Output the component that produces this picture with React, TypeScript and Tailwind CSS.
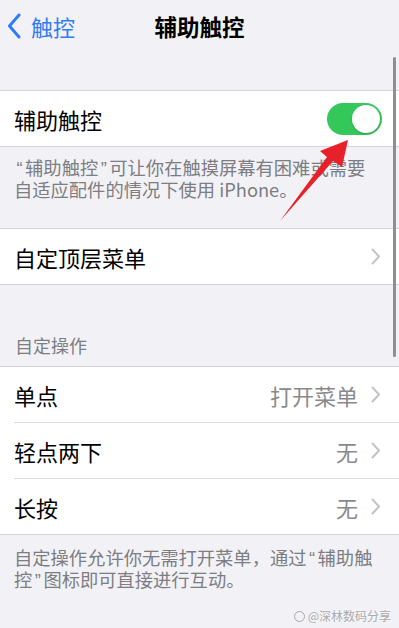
import React from "react";

const FONT = '"Noto Sans CJK SC", "Noto Sans", "Liberation Sans", sans-serif';

const Q = ({ c }: { c: string }) => (
  <span className="mx-[2.5px]" style={{ fontFamily: '"Liberation Sans", Arial, sans-serif' }}>{c}</span>
);

const Chevron = () => (
  <svg width="10" height="17" viewBox="0 0 10 17" className="ml-[13px] shrink-0">
    <path d="M1.5 1.5 L8 8.5 L1.5 15.5" fill="none" stroke="#c4c4c8" strokeWidth="2" strokeLinecap="round" strokeLinejoin="round" />
  </svg>
);

const Row = ({ label, value }: { label: string; value?: string }) => (
  <div className="h-[55px] flex items-center pl-[14px] pr-[18px] bg-white">
    <span className="flex-1 text-[22px] leading-none text-black">{label}</span>
    {value && <span className="text-[22px] leading-none text-[#8a8a8e]">{value}</span>}
    <Chevron />
  </div>
);

export default function App() {
  return (
    <div className="relative w-[399px] h-[628px] overflow-hidden bg-[#f2f2f6]" style={{ fontFamily: FONT }}>
      {/* Nav bar */}
      <div className="h-[52px] grid grid-cols-[1fr_auto_1fr] items-center">
        <div className="flex items-center pl-[7px] gap-[10px] text-[#2f7cf6]">
          <svg width="14" height="26" viewBox="0 0 14 26">
            <path d="M12 2 L2.5 13 L12 24" fill="none" stroke="#2f7cf6" strokeWidth="3" strokeLinecap="round" strokeLinejoin="round" />
          </svg>
          <span className="text-[22px] leading-none">触控</span>
        </div>
        <div className="text-[22.5px] leading-none font-semibold text-black">辅助触控</div>
        <div />
      </div>
      <div className="h-[38px]" />

      {/* Group 1 */}
      <div className="border-y border-[#d3d3d8] bg-white">
        <div className="h-[55px] flex items-center pl-[14px] pr-[17px]">
          <span className="flex-1 text-[22px] leading-none text-black">辅助触控</span>
          <div className="w-[55px] h-[32px] rounded-full bg-[#34c759] flex items-center justify-end p-[2px]">
            <div className="w-[28px] h-[28px] rounded-full bg-white shadow-[0_1px_2px_rgba(0,0,0,0.2)]" />
          </div>
        </div>
      </div>
      <div className="h-[81px] pt-[10px] pl-[14px] text-[18.3px] leading-[21px] text-[#7d7d82] whitespace-nowrap">
        <div><Q c="“" />辅助触控<Q c="”" />可让你在触摸屏幕有困难或需要</div>
        <div>自适应配件的情况下使用 iPhone。</div>
      </div>

      {/* Group 2 */}
      <div className="border-y border-[#d3d3d8]">
        <Row label="自定顶层菜单" />
      </div>

      <div className="h-[81px] flex flex-col justify-end pb-[10px] pl-[15px] text-[18px] leading-[21px] text-[#7d7d82]">
        自定操作
      </div>

      {/* Group 3 */}
      <div className="border-y border-[#d3d3d8] bg-white">
        <Row label="单点" value="打开菜单" />
        <div className="ml-[14px] h-px bg-[#dcdce0]" />
        <Row label="轻点两下" value="无" />
        <div className="ml-[14px] h-px bg-[#dcdce0]" />
        <Row label="长按" value="无" />
      </div>
      <div className="pt-[12px] pl-[14px] text-[18.3px] leading-[21px] text-[#7d7d82] whitespace-nowrap">
        <div>自定操作允许你无需打开菜单，通过<Q c="“" />辅助触</div>
        <div>控<Q c="”" />图标即可直接进行互动。</div>
      </div>

      {/* Scrollbar */}
      <div className="absolute left-[393px] top-[57px] w-[3px] h-[300px] rounded-full bg-[#8e8e93]" />

      {/* Red arrow */}
      <svg className="absolute left-0 top-0 pointer-events-none" width="399" height="628" viewBox="0 0 399 628">
        <polygon points="348,140 320,151 327,157 280,221 333,161 342,167" fill="#e8202a" />
      </svg>

      {/* Watermark */}
      <div className="absolute right-[8px] top-[610px] flex items-center gap-[3px] text-[12px] leading-none text-[#a9a9ad] [text-shadow:0_0_2px_#ffffff]">
        <span className="w-[11px] h-[11px] rounded-full border border-[#a9a9ad]" />
        <span>@深林数码分享</span>
      </div>
    </div>
  );
}
